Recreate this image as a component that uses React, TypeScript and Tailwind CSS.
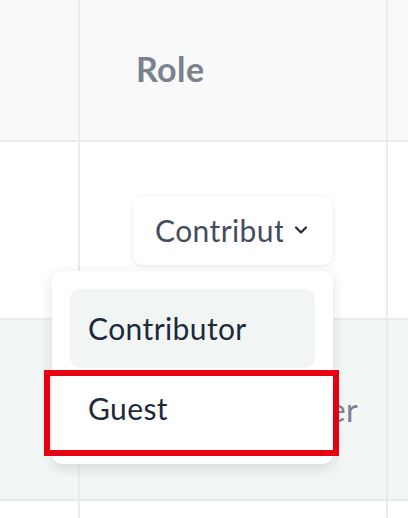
import { ChevronDown } from "lucide-react";

const options = ["Contributor", "Guest"];

export default function App() {
  return (
    <div className="relative w-[408px] h-[518px] overflow-hidden bg-white font-['Lato',sans-serif]">
      {/* Header row */}
      <div className="flex h-[142px] border-b-2 border-[#e9ecec] bg-[#f8f9f9]">
        <div className="w-[80px] border-r-2 border-[#e9ecec]" />
        <div className="flex w-[308px] items-center border-r-2 border-[#e9ecec] pb-[4px] pl-[56px]">
          <span className="text-[34px] font-bold tracking-[0.4px] text-[#7b828e]">Role</span>
        </div>
        <div className="flex-1" />
      </div>

      {/* Row with open select */}
      <div className="flex h-[178px] border-b-2 border-[#e9ecec] bg-white">
        <div className="w-[80px] border-r-2 border-[#e9ecec]" />
        <div className="flex w-[308px] items-center border-r-2 border-[#e9ecec] pl-[53px]">
          <div className="relative">
            <button className="flex h-[69px] w-[200px] items-center rounded-[10px] bg-white pl-[22px] pr-[22px] shadow-[0_1px_4px_rgba(15,23,42,0.10)]">
              <span className="w-[128px] overflow-hidden whitespace-nowrap text-left text-[30px] tracking-[0.4px] text-[#444c5e]">
                Contributor
              </span>
              <ChevronDown className="ml-auto h-[20px] w-[20px] text-[#1f2a3c]" strokeWidth={2.6} />
            </button>

            {/* Menu */}
            <div className="absolute left-[-81px] top-[75px] z-10 flex w-[281px] flex-col gap-[1px] rounded-[10px] bg-white px-[18px] pb-[16px] pt-[18px] shadow-[0_4px_14px_rgba(15,23,42,0.13)]">
              {options.map((o, i) => (
                <div
                  key={o}
                  className={`flex h-[79px] items-center rounded-[10px] px-[18px] text-[30px] tracking-[0.4px] text-[#1e293b] ${i === 0 ? "bg-[#f1f6f5]" : ""}`}
                >
                  {o}
                </div>
              ))}
            </div>
          </div>
        </div>
        <div className="flex-1" />
      </div>

      {/* Next row */}
      <div className="flex h-[181px] border-b-2 border-[#e9ecec] bg-[#f2f7f5]">
        <div className="w-[80px] border-r-2 border-[#e9ecec]" />
        <div className="flex w-[308px] items-center justify-end border-r-2 border-[#e9ecec] pr-[28px]">
          <span className="text-[32px] tracking-[0.4px] text-[#7b828e]">Viewer</span>
        </div>
        <div className="flex-1" />
      </div>

      <div className="flex h-[20px]">
        <div className="w-[80px] border-r-2 border-[#e9ecec]" />
        <div className="w-[308px] border-r-2 border-[#e9ecec]" />
      </div>

      {/* Highlight */}
      <div className="absolute left-[44px] top-[370px] z-20 h-[86px] w-[295px] border-[6px] border-[#e60012]" />
    </div>
  );
}
